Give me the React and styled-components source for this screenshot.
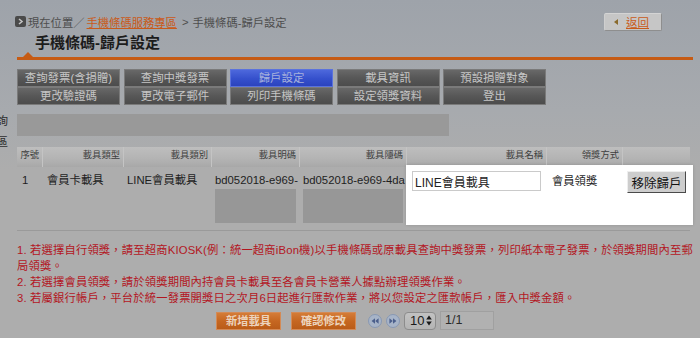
import React from 'react'
import styled, { createGlobalStyle } from 'styled-components'

const GlobalStyle = createGlobalStyle`
  html, body { margin: 0; padding: 0; }
  body {
    width: 700px;
    height: 338px;
    overflow: hidden;
    background: linear-gradient(180deg, #9ea3aa 0px, #a7aaae 110px, #adadad 170px, #adadad 100%);
    font-family: "Liberation Sans", "Noto Sans CJK TC", sans-serif;
    color: #1e1e1e;
  }
`;

const Head = styled.header`
  padding: 12px 0 0 17px;
  width: 676px;
`;
const TopBar = styled.div`
  display: flex;
  align-items: center;
  justify-content: space-between;
  height: 19px;
  padding-right: 31px;
`;
const Crumbs = styled.div`
  display: flex;
  align-items: center;
  margin-left: -2px;
  font-size: 11.3px;
  color: #4e4e4e;
  white-space: nowrap;
  a {
    margin-left: 2px;
    color: #c95a19;
    text-decoration: underline;
  }
`;
const Sep = styled.span`
  margin: 0 4px 0 5px;
`;
const CrumbIcon = styled.span`
  display: flex;
  align-items: center;
  justify-content: center;
  width: 11px;
  height: 11px;
  border-radius: 2px;
  background: #4a4a4a;
  margin-right: 2px;
`;
const BackButton = styled.a`
  display: flex;
  align-items: center;
  box-sizing: border-box;
  width: 58px;
  height: 18px;
  padding-left: 9px;
  background: #c6c6c6;
  border: 1px solid;
  border-color: #d4d4d4 #8e8e8e #8e8e8e #cfcfcf;
  border-radius: 2px;
  font-size: 11.5px;
  color: #c95a19;
  span {
    margin-left: 8px;
    text-decoration: underline;
  }
`;
const BackArrow = styled.i`
  width: 0;
  height: 0;
  border-top: 3px solid transparent;
  border-bottom: 3px solid transparent;
  border-right: 4px solid #8a6a2c;
`;
const Title = styled.h1`
  margin: 0;
  padding-left: 18px;
  font-size: 15px;
  line-height: 24px;
  font-weight: bold;
  color: #1c1c1c;
`;
const Rule = styled.div`
  position: relative;
  height: 3px;
  margin-top: 2px;
  background: #c65b14;
  &::before {
    content: '';
    position: absolute;
    left: 6px;
    top: -5px;
    border-left: 5px solid transparent;
    border-right: 5px solid transparent;
    border-bottom: 5px solid #c65b14;
  }
`;
const Tabs = styled.nav`
  display: grid;
  grid-template-columns: repeat(5, 103px);
  column-gap: 3.5px;
  margin-top: 9px;
`;
const Tab = styled.button`
  height: 18px;
  padding: 0;
  border: 1px solid ${p => (p.$active ? '#5a72dc' : '#7a7a7a')};
  background: ${p => (p.$active
    ? 'linear-gradient(#4d68dc, #3550cc 55%, #2b43be)'
    : 'linear-gradient(#686868, #575757 50%, #4c4c4c)')};
  color: ${p => (p.$active ? '#a7b1dc' : '#c6c6c6')};
  font-family: inherit;
  font-size: 11.4px;
  line-height: 16px;
`;

const Content = styled.div`
  display: flex;
  margin-top: 9px;
`;
const Side = styled.aside`
  width: 9px;
  overflow: hidden;
  display: flex;
  flex-direction: column;
  align-items: flex-end;
  margin-top: -3px;
  font-size: 11.5px;
  line-height: 21px;
  color: #2e2e2e;
  white-space: nowrap;
  span { padding-right: 1px; }
`;
const Main = styled.main`
  margin-left: 8px;
  width: 676px;
`;
const GrayBar = styled.div`
  width: 432px;
  height: 22px;
  background: #999999;
`;
const Table = styled.div`
  margin-top: 11px;
  width: 673px;
`;
const cols = '25px 80px 87px 87px 106px 139px 75px 67px';
const HeadRow = styled.div`
  display: grid;
  grid-template-columns: ${cols};
  column-gap: 1px;
  background: #c4c4c4;
  height: 20px;
`;
const HeadCell = styled.div`
  background: linear-gradient(#bebebe, #b3b3b3 60%, #a8a8a8);
  font-size: 9.3px;
  line-height: 17px;
  text-align: right;
  padding: 0 3px;
  color: #3e3e3e;
  white-space: nowrap;
`;
const DataRow = styled.div`
  display: grid;
  grid-template-columns: ${cols};
  column-gap: 1px;
  align-items: start;
  height: 63px;
  border-bottom: 1px solid #9a9a9a;
`;
const Cell = styled.div`
  padding: 5px 3px 0 ${p => p.$pad || 4}px;
  font-size: 11.3px;
  line-height: 16px;
  white-space: nowrap;
  overflow: hidden;
`;
const Redacted = styled.div`
  height: 34px;
  margin-top: 1px;
  background: #979797;
`;
const Spotlight = styled.div`
  grid-column: 6 / span 3;
  margin: -2px -3px 0 -1px;
  height: 60px;
  box-sizing: border-box;
  padding-top: 6px;
  background: #ffffff;
  box-shadow: 0 0 3px rgba(0, 0, 0, 0.15);
  display: grid;
  grid-template-columns: 141px 76px 1fr;
  align-items: start;
`;
const NameInput = styled.input`
  box-sizing: border-box;
  width: 129px;
  height: 20px;
  margin-left: 6px;
  padding: 0 2px;
  border: 1px solid #cacaca;
  font-family: inherit;
  font-size: 12px;
  color: #222;
  outline: none;
`;
const Method = styled.div`
  padding: 2px 0 0 5px;
  font-size: 11.3px;
  line-height: 16px;
`;
const RemoveButton = styled.button`
  width: 59px;
  height: 22px;
  margin-left: 4px;
  padding: 0;
  background: #cdcdcd;
  border: 1px solid;
  border-color: #eeeeee #4a4a4a #4a4a4a #eeeeee;
  font-family: inherit;
  font-size: 12.5px;
  color: #111;
`;
const Notes = styled.div`
  margin-top: 11px;
  width: 676px;
  font-size: 11.3px;
  line-height: 16px;
  letter-spacing: 0.17px;
  color: #b3161f;
`;
const Footer = styled.div`
  display: flex;
  align-items: center;
  justify-content: center;
  margin-top: 5px;
  width: 676px;
`;
const OrangeButton = styled.button`
  width: 65px;
  height: 18px;
  padding: 0;
  margin-right: ${p => p.$gap || 0}px;
  border: 1px solid #d48a55;
  background: linear-gradient(#d47c38, #c66721 50%, #ba5c19);
  color: #ecd3bc;
  font-family: inherit;
  font-size: 11.3px;
  font-weight: bold;
  line-height: 16px;
`;
const Pager = styled.div`
  display: flex;
  align-items: center;
  gap: 4px;
  margin-left: 12px;
`;
const Picker = styled.div`
  display: flex;
  align-items: center;
  justify-content: space-between;
  box-sizing: border-box;
  width: 32px;
  height: 18px;
  padding: 0 3px 0 5px;
  border: 1px solid #8c8c8c;
  border-radius: 4px;
  background: linear-gradient(#c2c2c2, #b4b4b4);
  font-size: 13px;
  color: #1a1a1a;
`;
const PageInput = styled.div`
  box-sizing: border-box;
  width: 54px;
  height: 19px;
  padding-left: 4px;
  border: 1px solid #a0a0a0;
  background: #b1b1b1;
  font-size: 12.5px;
  line-height: 17px;
  color: #2a2a2a;
`;

function RoundArrow({ dir }) {
  const tri = dir === 'left'
    ? 'M7 4.2 L3.6 7 L7 9.8 Z M10.6 4.2 L7.2 7 L10.6 9.8 Z'
    : 'M7 4.2 L10.4 7 L7 9.8 Z M3.4 4.2 L6.8 7 L3.4 9.8 Z';
  return (
    <svg width="14" height="14" viewBox="0 0 14 14">
      <circle cx="7" cy="7" r="6.5" fill="#a7b4c8" stroke="#8898b3" />
      <path d={tri} fill="#4b5f8c" />
    </svg>
  );
}

const tabs = [
  ['查詢發票(含捐贈)', '查詢中獎發票', '歸戶設定', '載具資訊', '預設捐贈對象'],
  ['更改驗證碼', '更改電子郵件', '列印手機條碼', '設定領獎資料', '登出'],
];

const headers = ['序號', '載具類型', '載具類別', '載具明碼', '載具隱碼', '載具名稱', '領獎方式', ''];

const notes = [
  '1. 若選擇自行領獎，請至超商KIOSK(例：統一超商iBon機)以手機條碼或原載具查詢中獎發票，列印紙本電子發票，於領獎期間內至郵局領獎。',
  '2. 若選擇會員領獎，請於領獎期間內持會員卡載具至各會員卡營業人據點辦理領獎作業。',
  '3. 若屬銀行帳戶，平台於統一發票開獎日之次月6日起進行匯款作業，將以您設定之匯款帳戶，匯入中獎金額。',
];

export default function App() {
  return (
    <>
      <GlobalStyle />
      <Head>
        <TopBar>
          <Crumbs>
            <CrumbIcon>
              <svg width="7" height="7" viewBox="0 0 7 7">
                <path d="M2 1 L5 3.5 L2 6" fill="none" stroke="#c4c4c4" strokeWidth="1.6" />
              </svg>
            </CrumbIcon>
            <span>現在位置／</span>
            <a>手機條碼服務專區</a>
            <Sep>{'>'}</Sep>
            <span>手機條碼-歸戶設定</span>
          </Crumbs>
          <BackButton>
            <BackArrow />
            <span>返回</span>
          </BackButton>
        </TopBar>
        <Title>手機條碼-歸戶設定</Title>
        <Rule />
        <Tabs>
          {tabs.flat().map((t) => (
            <Tab key={t} $active={t === '歸戶設定'}>{t}</Tab>
          ))}
        </Tabs>
      </Head>
      <Content>
        <Side>
          <span>查詢</span>
          <span>專區</span>
        </Side>
        <Main>
          <GrayBar />
          <Table>
            <HeadRow>
              {headers.map((h, i) => (
                <HeadCell key={i}>{h}</HeadCell>
              ))}
            </HeadRow>
            <DataRow>
              <Cell $pad={5}>1</Cell>
              <Cell>會員卡載具</Cell>
              <Cell $pad={3}>LINE會員載具</Cell>
              <Cell $pad={3}>
                bd052018-e969-
                <Redacted />
              </Cell>
              <Cell $pad={3}>
                bd052018-e969-4da
                <Redacted />
              </Cell>
              <Spotlight>
                <NameInput defaultValue="LINE會員載具" />
                <Method>會員領獎</Method>
                <RemoveButton>移除歸戶</RemoveButton>
              </Spotlight>
            </DataRow>
          </Table>
          <Notes>
            {notes.map((n) => (
              <div key={n}>{n}</div>
            ))}
          </Notes>
          <Footer>
            <OrangeButton $gap={10}>新增載具</OrangeButton>
            <OrangeButton>確認修改</OrangeButton>
            <Pager>
              <RoundArrow dir="left" />
              <RoundArrow dir="right" />
              <Picker>
                10
                <svg width="6" height="11" viewBox="0 0 6 11">
                  <path d="M3 0.5 L5.8 4.5 L0.2 4.5 Z M3 10.5 L5.8 6.5 L0.2 6.5 Z" fill="#1a1a1a" />
                </svg>
              </Picker>
              <PageInput>1/1</PageInput>
            </Pager>
          </Footer>
        </Main>
      </Content>
    </>
  )
}
